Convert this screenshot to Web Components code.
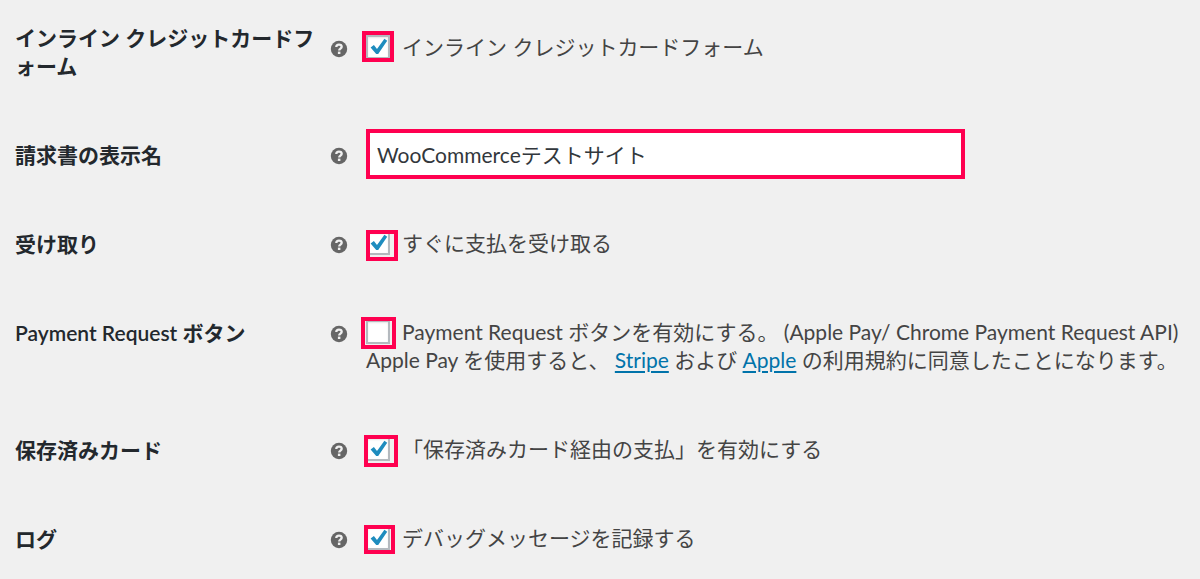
<!DOCTYPE html>
<html lang="ja">
<head>
<meta charset="utf-8">
<title>決済設定</title>
<style>
body { margin: 0; background: #f0f0f0; color: #444; font: 21px/28px Lato, "Noto Sans CJK JP", sans-serif; }
a { color: #0073aa; text-underline-offset: 3px; text-decoration-thickness: 2px; text-decoration-skip-ink: auto; }
</style>
</head>
<body>
<settings-form>
  <settings-row tall label="インライン クレジットカードフォーム"><check-field checked mark="a">インライン クレジットカードフォーム</check-field></settings-row>
  <settings-row label="請求書の表示名"><text-field label="請求書の表示名" value="WooCommerceテストサイト"></text-field></settings-row>
  <settings-row label="受け取り"><check-field checked mark="b">すぐに支払を受け取る</check-field></settings-row>
  <settings-row label="Payment Request ボタン">
    <check-field mark="c">Payment Request ボタンを有効にする。 (Apple Pay/ Chrome Payment Request API)<span slot="note">Apple Pay を使用すると、 <a href="#stripe">Stripe</a> および <a href="#apple">Apple</a> の利用規約に同意したことになります。</span></check-field>
  </settings-row>
  <settings-row label="保存済みカード"><check-field checked mark="d">「保存済みカード経由の支払」を有効にする</check-field></settings-row>
  <settings-row label="ログ"><check-field checked mark="e">デバッグメッセージを記録する</check-field></settings-row>
</settings-form>
<script>
class Base extends HTMLElement {
  connectedCallback() {
    if (this.shadowRoot) return;
    this.attachShadow({ mode: "open" }).innerHTML = this.view();
  }
}
customElements.define("settings-form", class extends Base {
  view() {
    return `<style>
      :host { display: block; }
      form { display: grid; gap: 61px; padding: 23px 15px 24px; }
    </style><form><slot></slot></form>`;
  }
});
customElements.define("help-tip", class extends Base {
  view() {
    return `<style>
      :host { display: block; width: 16px; height: 16px; }
      svg { display: block; overflow: visible; }
    </style>
    <svg width="16" height="16" viewBox="0 0 16 16" role="img" aria-label="ヘルプ">
      <circle cx="8" cy="8" r="8.2" fill="#666"/>
      <path d="M5.3 6.1C5.3 4.3 6.5 3.6 8 3.6s2.7.8 2.7 2.2c0 1.8-2.5 1.8-2.5 3.7" fill="none" stroke="#f0f0f0" stroke-width="2.3"/>
      <rect x="6.9" y="10.6" width="2.5" height="2.4" fill="#f0f0f0"/>
    </svg>`;
  }
});
customElements.define("settings-row", class extends Base {
  view() {
    return `<style>
      :host { display: grid; grid-template-columns: 304px minmax(0, 1fr); column-gap: 12px; }
      h2 { margin: 0 0 -1px; padding-top: 1px; font: inherit; font-weight: 600; color: #23282d; line-break: anywhere; }
      .body { align-self: center; display: grid; grid-template-columns: 16px minmax(0, 1fr); column-gap: 19px; }
      :host([tall]) .body { padding-bottom: 8px; }
      help-tip { margin-top: 8px; }
    </style>
    <h2>${this.getAttribute("label")}</h2>
    <div class="body"><help-tip></help-tip><slot></slot></div>`;
  }
});
customElements.define("text-field", class extends Base {
  view() {
    return `<style>
      :host { display: block; margin: -11px 0; }
      input { display: block; box-sizing: border-box; width: 100%; max-width: 599px; height: 50px; margin: 0;
        padding: 0 7px; border: 4px solid #ff0050; border-radius: 0; background: #fff; color: #32373c; font: inherit; outline: 0; }
    </style>
    <input type="text" aria-label="${this.getAttribute("label")}" value="${this.getAttribute("value")}">`;
  }
});
customElements.define("check-field", class extends Base {
  view() {
    return `<style>
      :host { display: block; }
      label { display: flex; gap: 12px; }
      .box { position: relative; flex: none; width: 24px; height: 24px; margin-top: 2px; }
      input { appearance: none; display: block; box-sizing: border-box; width: 24px; height: 24px; margin: 0;
        border: 2px solid #b4b9be; background: #fff; box-shadow: inset 0 1px 2px #0000001a; }
      svg { position: absolute; inset: 0; display: none; pointer-events: none; }
      input:checked + svg { display: block; }
      /* highlight drawn over the control */
      .mark { position: absolute; inset: var(--mark); border: 4px solid #ff0050; pointer-events: none; }
      :host([mark="a"]) { --mark: -4px -4px -3px -4px; }
      :host([mark="b"]) { --mark: -1px -8px -6px 0; }
      :host([mark="c"]) { --mark: -3px -6px -5px -5px; }
      :host([mark="d"]) { --mark: -2px -8px -6px -2px; }
      :host([mark="e"]) { --mark: -1px -5px -4px -2px; }
      ::slotted([slot="note"]) { display: block; }
    </style>
    <label><span class="box"><input type="checkbox" ${this.hasAttribute("checked") ? "checked" : ""}>
      <svg width="24" height="24" viewBox="0 0 24 24"><path d="M4.6 12.4 7.9 10 11 14 18.4 3.8 21.2 5.8 12.2 19h-2z" fill="#1e8cbe"/></svg>
      <span class="mark"></span></span><span><slot></slot></span></label>
    <slot name="note"></slot>`;
  }
});
</script>
</body>
</html>
